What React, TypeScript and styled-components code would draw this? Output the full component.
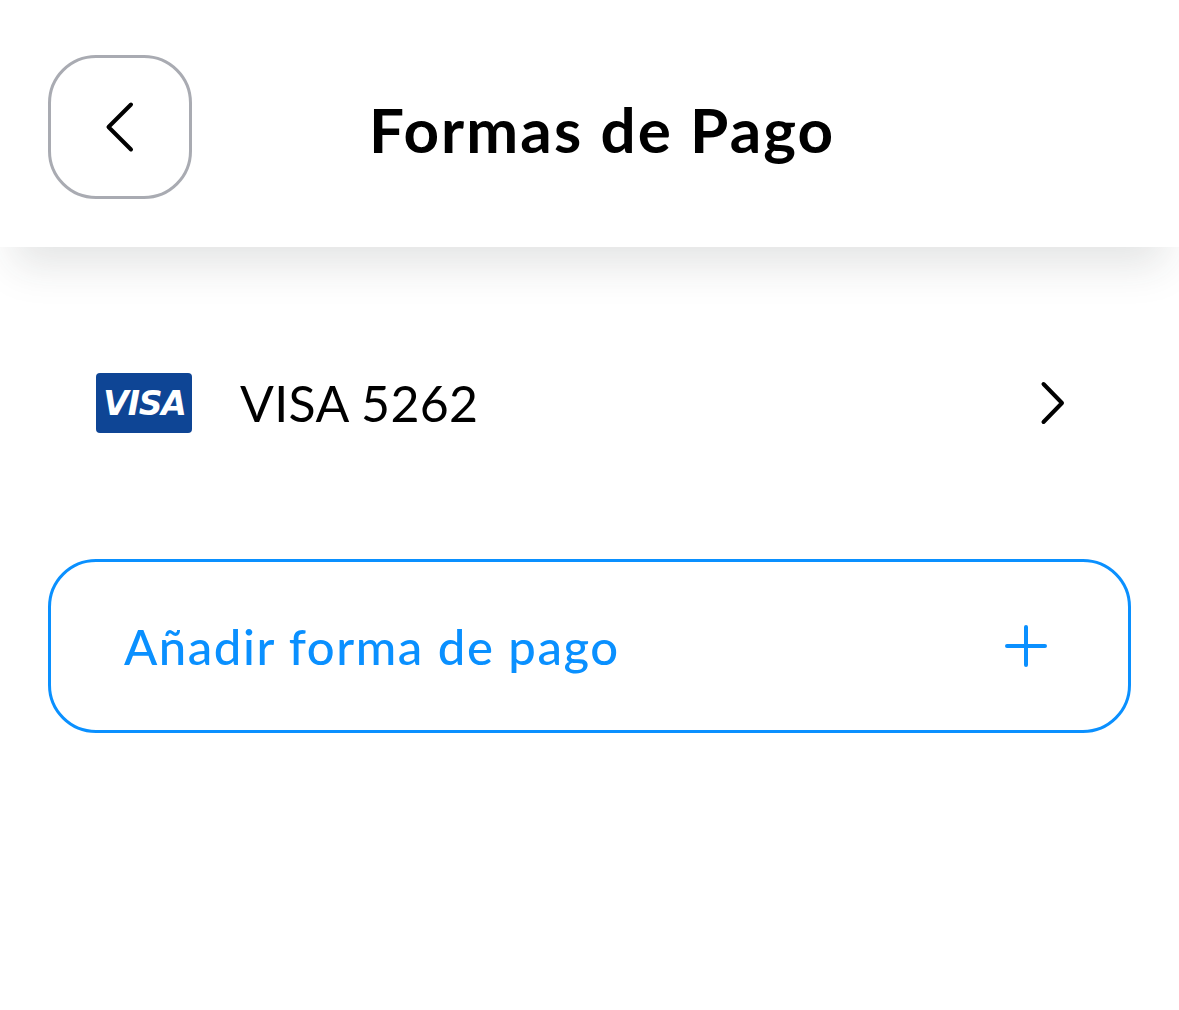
import React from "react";
import styled, { createGlobalStyle } from "styled-components";

const Global = createGlobalStyle`
  html, body { margin: 0; padding: 0; background: #fff; }
  body { font-family: "Lato", "Noto Sans", sans-serif; }
`;

const Page = styled.div`
  width: 1179px;
  height: 1010px;
  overflow: hidden;
  background: #fff;
`;

const Header = styled.header`
  height: 247px;
  box-sizing: border-box;
  padding: 55px 48px 0;
  display: flex;
  align-items: flex-start;
  background: #fff;
  box-shadow: 0 32px 40px -14px rgba(40, 50, 50, 0.13);
`;

const BackButton = styled.button`
  width: 144px;
  height: 144px;
  flex: none;
  box-sizing: border-box;
  padding: 0;
  display: flex;
  align-items: center;
  justify-content: center;
  background: #fff;
  border: 3px solid #a9abb2;
  border-radius: 48px;
`;

const Title = styled.h1`
  margin: 0 0 0 177px;
  height: 144px;
  padding-top: 4px;
  box-sizing: border-box;
  display: flex;
  align-items: center;
  font-size: 62px;
  font-weight: 700;
  letter-spacing: 2.1px;
  color: #000;
  white-space: nowrap;
`;

const Content = styled.main`
  padding: 126px 48px 0;
  display: flex;
  flex-direction: column;
`;

const CardRow = styled.div`
  height: 60px;
  padding: 0 66px 0 48px;
  display: flex;
  align-items: center;
`;

const VisaCard = styled.div`
  width: 96px;
  height: 60px;
  flex: none;
  padding-left: 1px;
  box-sizing: border-box;
  display: flex;
  align-items: center;
  justify-content: center;
  background: #0e4595;
  border-radius: 4px;
`;

const VisaMark = styled.span`
  font-family: "DejaVu Sans", "Liberation Sans", sans-serif;
  font-size: 33px;
  font-weight: 700;
  font-style: italic;
  letter-spacing: -1.2px;
  color: #fff;
`;

const CardName = styled.span`
  margin-left: 48px;
  flex: 1;
  font-size: 50px;
  font-weight: 400;
  letter-spacing: 0.35px;
  color: #000;
`;

const AddButton = styled.button`
  margin-top: 126px;
  width: 1083px;
  height: 174px;
  box-sizing: border-box;
  padding: 0 81px 0 73px;
  display: flex;
  align-items: center;
  justify-content: space-between;
  background: #fff;
  border: 3px solid #0a90ff;
  border-radius: 48px;
  font-family: inherit;
  font-size: 49px;
  font-weight: 500;
  letter-spacing: 1.55px;
  color: #0a90ff;
`;

const Icon = styled.svg`
  display: block;
  flex: none;
  fill: none;
  stroke: currentColor;
  stroke-width: 4;
  stroke-linecap: round;
  stroke-linejoin: round;
`;

const Ink = styled(Icon)`
  color: #000;
`;

export default function App() {
  return (
    <Page>
      <Global />
      <Header>
        <BackButton aria-label="Volver">
          <Ink width="32" height="52" viewBox="0 0 32 52">
            <path d="M27 3.5 4.5 26 27 48.5" />
          </Ink>
        </BackButton>
        <Title>Formas de Pago</Title>
      </Header>
      <Content>
        <CardRow>
          <VisaCard>
            <VisaMark>VISA</VisaMark>
          </VisaCard>
          <CardName>VISA 5262</CardName>
          <Ink width="26" height="46" viewBox="0 0 26 46">
            <path d="M4.5 4 23 23 4.5 42" />
          </Ink>
        </CardRow>
        <AddButton>
          Añadir forma de pago
          <Icon width="42" height="42" viewBox="0 0 42 42">
            <path d="M21 2v38M2 21h38" />
          </Icon>
        </AddButton>
      </Content>
    </Page>
  );
}
